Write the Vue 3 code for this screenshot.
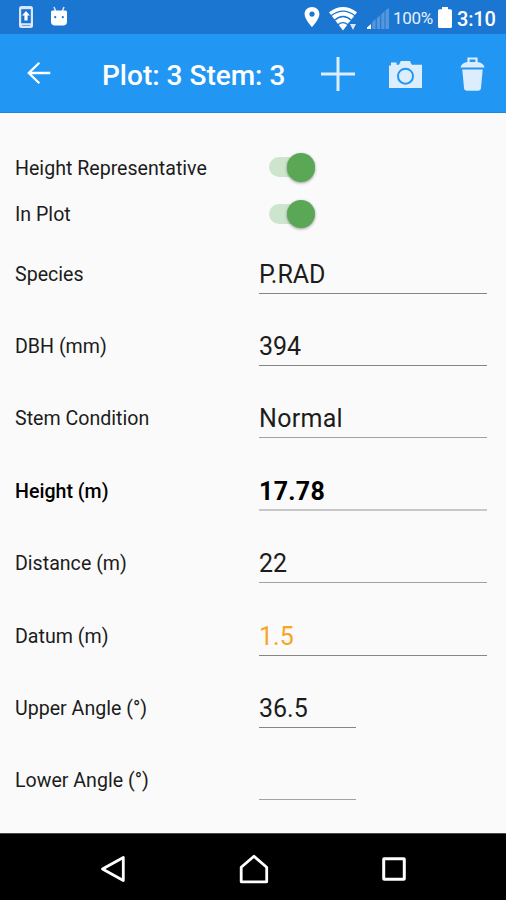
<script setup>
import { ref } from 'vue'

const toggles = ref([
  { label: 'Height Representative', on: true },
  { label: 'In Plot', on: true },
])

const fields = ref([
  { label: 'Species', value: 'P.RAD' },
  { label: 'DBH (mm)', value: '394' },
  { label: 'Stem Condition', value: 'Normal', line: 'mid', style: 'wide' },
  { label: 'Height (m)', value: '17.78', style: 'strong', line: 'soft' },
  { label: 'Distance (m)', value: '22', line: 'mid' },
  { label: 'Datum (m)', value: '1.5', style: 'warn' },
  { label: 'Upper Angle (°)', value: '36.5', short: true },
  { label: 'Lower Angle (°)', value: '', short: true, line: 'mid' },
])
</script>

<template>
  <div class="screen">
    <div class="status">
      <svg class="s-update" width="16" height="24" viewBox="0 0 16 24">
        <rect x="1" y="1" width="14" height="22" rx="2.5" fill="#dbe7fb" />
        <rect x="3.2" y="4.2" width="9.6" height="14" fill="#1b73cf" />
        <path d="M8 6l4 4.6H9.6v5H6.4v-5H4z" fill="#fff" />
        <path d="M4 20.5h8" stroke="#6fa5e2" stroke-width="1" />
      </svg>
      <svg class="s-bot" width="18" height="20" viewBox="0 0 18 20">
        <path d="M4 1l1.6 4M14 1l-1.6 4" stroke="#dbe7fb" stroke-width="1.5" />
        <path d="M1 6q0-1.500 1.500-1.500h13q1.500 0 1.500 1.500v9.500q0 4-4 4H5q-4 0-4-4z" fill="#fff" />
        <circle cx="5.2" cy="11.2" r="1.1" fill="#1b73cf" />
        <circle cx="12.8" cy="11.2" r="1.1" fill="#1b73cf" />
      </svg>
      <svg class="s-pin" width="16" height="20" viewBox="0 0 16 20">
        <path fill="#fff" fill-rule="evenodd" d="M8 0C3.700 0 .6 3.100.6 7.200.6 12 8 20 8 20s7.400-8 7.400-12.800C15.400 3.100 12.300 0 8 0zm0 4.500a2.600 2.600 0 1 1 0 5.200 2.600 2.600 0 0 1 0-5.200z" />
      </svg>
      <svg class="s-wifi" width="28" height="24" viewBox="0 0 28 24">
        <path d="M0 5.300Q14-5.300 28 5.300L14 23.500z" fill="#fff" />
        <path d="M2 8.800Q14-.6 26 8.800M5.500 13.200Q14 5.800 22.500 13.200M9 17.800Q14 13.500 19 17.800" fill="none" stroke="#1b73cf" stroke-width="1.3" />
        <path d="M19.500 15.500h8.500v3l-4 6-4.500-4z" fill="#1b73cf" />
        <path d="M21 17h6l-3 6z" fill="#dbe7fb" />
      </svg>
      <svg class="s-signal" width="22" height="21" viewBox="0 0 22 21">
        <path d="M0 21v-1.500l4-3.500v5z" fill="#fff" />
        <path d="M5.200 21v-7l3.400-3v10zM9.800 21V10.300l3.400-3V21zM14.300 21V6.300l3.200-3V21zM18.500 21V2.300L22 0v21z" fill="#5596dd" />
      </svg>
      <span class="percent">100%</span>
      <svg class="s-battery" width="14" height="21" viewBox="0 0 14 21">
        <path d="M4 0h6v2.300h2.500q1.500 0 1.500 1.500V19.500q0 1.500-1.500 1.500h-11Q0 21 0 19.500V3.800q0-1.500 1.500-1.500H4z" fill="#fff" />
      </svg>
      <span class="clock">3:10</span>
    </div>

    <header class="toolbar">
      <button class="icon-btn back" aria-label="Back">
        <svg width="24" height="24" viewBox="0 0 24 24">
          <path d="M12.300 1.700L1.800 12l10.500 10.300M1.800 12H23.300" fill="none" stroke="#fff" stroke-width="2.3" />
        </svg>
      </button>
      <h1>Plot: 3 Stem: 3</h1>
      <button class="icon-btn add" aria-label="Add">
        <svg width="34" height="34" viewBox="0 0 34 34">
          <path d="M17 0v34M0 17h34" stroke="#dcedfd" stroke-width="3" />
        </svg>
      </button>
      <button class="icon-btn camera" aria-label="Camera">
        <svg width="33" height="27" viewBox="0 0 33 27">
          <path d="M0 4.500h2V1.500h5.500v2.200H10L11.800 0H21l1.700 3.700H33V27H0z" fill="#dcedfd" />
          <circle cx="16.500" cy="15.200" r="7.5" fill="none" stroke="#2196f3" stroke-width="2" />
        </svg>
      </button>
      <button class="icon-btn trash" aria-label="Delete">
        <svg width="25" height="34" viewBox="0 0 25 34">
          <path d="M8.500 6V1.500h8V6" fill="none" stroke="#dcedfd" stroke-width="2.2" />
          <path d="M.5 10.500Q1.500 5.500 8 5h9q6.500.500 7.500 5.500z" fill="#dcedfd" />
          <path d="M2.300 12.500h20.400L21 31q-.3 2.700-3 2.700H7Q4.300 33.700 4 31z" fill="#dcedfd" />
        </svg>
      </button>
    </header>

    <main class="form">
      <div v-for="t in toggles" :key="t.label" class="toggle-row">
        <span class="label">{{ t.label }}</span>
        <button
          class="switch"
          :class="{ on: t.on }"
          role="switch"
          :aria-checked="t.on.toString()"
          :aria-label="t.label"
          @click="t.on = !t.on"
        >
          <span class="thumb"></span>
        </button>
      </div>

      <div v-for="f in fields" :key="f.label" class="field-row">
        <span class="label" :class="{ strong: f.style === 'strong' }">{{ f.label }}</span>
        <div class="value" :class="[f.style, f.line, { short: f.short }]">{{ f.value }}</div>
      </div>
    </main>

    <nav class="navbar">
      <svg width="26" height="28" viewBox="0 0 26 28">
        <path d="M2.500 14L23.300 2.500v23z" fill="none" stroke="#fff" stroke-width="2.8" stroke-linejoin="round" />
      </svg>
      <svg width="30" height="30" viewBox="0 0 30 30">
        <path d="M2.200 13.300L15 2.300l12.700 11v14.500H2.200z" fill="none" stroke="#fff" stroke-width="2.8" stroke-linejoin="round" />
      </svg>
      <svg width="26" height="26" viewBox="0 0 26 26">
        <rect x="2.7" y="2.7" width="20.6" height="20.6" rx=".5" fill="none" stroke="#fff" stroke-width="3" stroke-linejoin="round" />
      </svg>
    </nav>
  </div>
</template>

<style>
body {
  margin: 0;
}
</style>

<style scoped>
.screen {
  display: flex;
  flex-direction: column;
  width: 506px;
  height: 900px;
  overflow: hidden;
  background: #fafafa;
  color: #1c1c1c;
  font-family: Roboto, "Liberation Sans", sans-serif;
}

.status {
  display: flex;
  align-items: center;
  flex: none;
  box-sizing: border-box;
  height: 34px;
  padding-left: 18px;
  background: #1b76d2;
  color: #fff;
  white-space: nowrap;
}

.status svg {
  flex: none;
}

.s-bot {
  margin: 0 0 3px 16px;
}

.s-pin {
  margin-left: 236px;
}

.s-wifi {
  margin: 3px 0 0 9px;
}

.s-signal {
  margin: 3px 0 0 10px;
}

.percent {
  width: 39px;
  margin: 2px 0 0 4px;
  font-size: 17px;
  letter-spacing: -0.3px;
  color: #e6f0fc;
}

.s-battery {
  margin-left: 6px;
}

.clock {
  margin: 3px 0 0 5px;
  font-size: 20px;
  font-weight: 500;
  letter-spacing: -0.2px;
}

.toolbar {
  display: flex;
  align-items: center;
  flex: none;
  box-sizing: border-box;
  height: 79px;
  padding-left: 27px;
  border-bottom: 1px solid #1b87e0;
  background: #2196f3;
  color: #fff;
}

.icon-btn {
  display: flex;
  flex: none;
  margin-top: 2px;
  padding: 0;
  border: none;
  background: none;
  cursor: pointer;
}

.back {
  margin-top: 0;
  margin-bottom: 1px;
}

h1 {
  flex: none;
  width: 185px;
  margin: 4px 0 0 51px;
  font-size: 28px;
  font-weight: 500;
  white-space: nowrap;
}

.add {
  margin-left: 34px;
}

.camera {
  margin-left: 34px;
}

.trash {
  margin-left: 38px;
}

.form {
  flex: 1;
  padding: 31px 0 0 15px;
}

.toggle-row {
  display: flex;
  align-items: center;
  height: 46.5px;
}

.label {
  flex: none;
  width: 244px;
  margin-top: 2px;
  font-size: 19.6px;
  white-space: nowrap;
}

.label.strong {
  font-weight: 500;
  color: #000;
}

.switch {
  display: flex;
  align-items: center;
  justify-content: flex-start;
  width: 46px;
  height: 20px;
  margin-left: 10px;
  padding: 0;
  border: none;
  border-radius: 10px;
  background: #d0d0d0;
  cursor: pointer;
}

.switch.on {
  justify-content: flex-end;
  background: #cde5cd;
}

.thumb {
  flex: none;
  width: 28.5px;
  height: 28.5px;
  border-radius: 50%;
  background: #f1f1f1;
  box-shadow: 0 1px 3px rgba(0, 0, 0, 0.4);
}

.switch.on .thumb {
  background: #5aa856;
}

.field-row {
  display: flex;
  align-items: center;
  height: 72.4px;
}

.value {
  box-sizing: border-box;
  width: 228px;
  height: 41px;
  border-bottom: 1.5px solid #858585;
  font-size: 25px;
  line-height: 43px;
  white-space: nowrap;
}

.value.mid {
  border-bottom-color: #a2a2a2;
}

.value.soft {
  height: 42px;
  border-bottom: 2px solid #c8c8c8;
  line-height: 45px;
}

.value.short {
  width: 97px;
}

.value.wide {
  letter-spacing: 0.3px;
}

.value.strong {
  font-weight: 700;
  letter-spacing: 0.3px;
  color: #000;
}

.value.warn {
  color: #f9a425;
}

.navbar {
  display: flex;
  align-items: center;
  justify-content: space-between;
  flex: none;
  box-sizing: border-box;
  height: 67px;
  padding: 3px 99px 0 100px;
  border-top: 1px solid #4a4a4a;
  background: #000;
}
</style>
